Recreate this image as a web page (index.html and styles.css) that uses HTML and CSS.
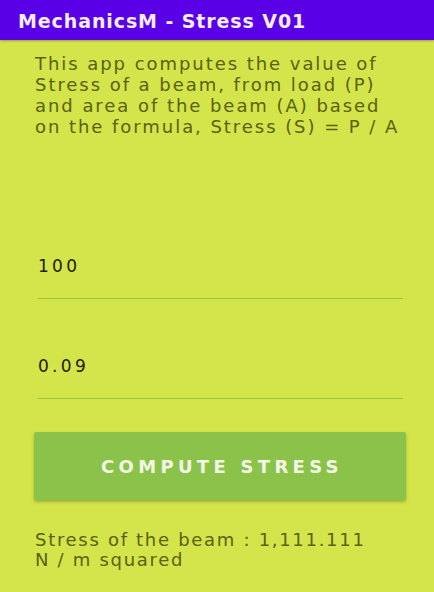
FILE: index.html
```html
<!DOCTYPE html>
<html>
<head>
<meta charset="utf-8">
<link rel="stylesheet" href="styles.css">
</head>
<body>
<div class="app">
  <header class="appbar"><span class="title">MechanicsM - Stress V01</span></header>
  <main class="content">
    <p class="desc">This app computes the value of<br>Stress of a beam, from load (P)<br>and area of the beam (A) based<br>on the formula, Stress (S) = P / A</p>
    <div class="field field-first"><span class="value">100</span></div>
    <div class="field"><span class="value">0.09</span></div>
    <button class="btn">COMPUTE STRESS</button>
    <p class="result">Stress of the beam : 1,111.111<br>N / m squared</p>
  </main>
</div>
</body>
</html>
```
FILE: styles.css
```css
html, body {
  margin: 0;
  padding: 0;
}
body {
  width: 434px;
  height: 592px;
  overflow: hidden;
  background: #d4e44b;
}
.app {
  display: flex;
  flex-direction: column;
  height: 592px;
}
.appbar {
  height: 40px;
  background: #5a00e6;
  display: flex;
  align-items: center;
  padding-left: 18px;
  box-shadow: 0 1px 2px rgba(90, 70, 20, 0.45);
}
.title {
  font-family: "DejaVu Sans", sans-serif;
  font-weight: bold;
  font-size: 19px;
  letter-spacing: 0.9px;
  color: #f3edff;
  padding-top: 1px;
}
.content {
  display: flex;
  flex-direction: column;
  padding: 0 20px 0 35px;
}
.desc {
  margin: 13px 0 0 0;
  font-family: "DejaVu Sans", sans-serif;
  font-size: 18px;
  line-height: 21px;
  letter-spacing: 1.95px;
  color: #59620f;
  white-space: nowrap;
}
.field {
  margin-left: 3px;
  margin-right: 11px;
  border-bottom: 1.5px solid #99c83e;
  height: 42px;
  display: flex;
  align-items: flex-start;
}
.field-first {
  margin-top: 119px;
}
.field + .field {
  margin-top: 57px;
}
.value {
  font-family: "DejaVu Sans", sans-serif;
  font-size: 17px;
  letter-spacing: 3.3px;
  color: #1d2008;
  line-height: 20px;
}
.btn {
  margin-top: 33px;
  margin-left: -1px;
  width: 372px;
  height: 68px;
  border: none;
  border-radius: 2px;
  background: #8bc34a;
  box-shadow: 0 2px 3px rgba(60, 80, 10, 0.35);
  font-family: "DejaVu Sans", sans-serif;
  font-weight: bold;
  font-size: 18px;
  letter-spacing: 4.3px;
  color: #f3f8e6;
  padding: 0 0 0 4px;
}
.result {
  margin: 30px 0 0 0;
  font-family: "DejaVu Sans", sans-serif;
  font-size: 18px;
  line-height: 20px;
  letter-spacing: 1.7px;
  color: #59620f;
  white-space: nowrap;
}
```
